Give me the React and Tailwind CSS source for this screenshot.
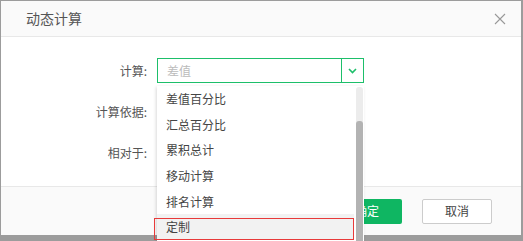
import React from 'react';

const items = ['差值百分比', '汇总百分比', '累积总计', '移动计算', '排名计算', '定制'];

const FormRow = ({ label, children }) => (
  <div className="flex items-center h-[25px]">
    <div className="w-[146px] text-right text-[12px] text-[#555]">{label}</div>
    <div className="ml-[10px]">{children}</div>
  </div>
);

const App = () => {
  return (
    <div
      className="w-[523px] h-[241px] overflow-hidden bg-[#9c9c9c] pt-[1px] pl-[1px] relative"
      style={{ fontFamily: '"Noto Sans CJK SC", "Noto Sans", sans-serif' }}
    >
      <div className="w-[520px] h-[234px] flex flex-col bg-white relative">
        {/* header */}
        <div className="h-[36px] bg-[#fafafa] border-b border-[#e8e8e8] flex items-center justify-between pl-[25px] pr-[15px]">
          <span className="text-[14px] text-[#555]">动态计算</span>
          <svg width="12" height="12" viewBox="0 0 12 12" className="mt-[1px]">
            <path d="M1 1L11 11M11 1L1 11" stroke="#999" strokeWidth="1.1" fill="none" />
          </svg>
        </div>

        {/* body */}
        <div className="flex-1 bg-white pt-[21px] flex flex-col gap-4">
          <FormRow label="计算:">
            <div className="w-[207px] h-[25px] border border-[#1dbf6a] flex">
              <div className="flex-1 flex items-center pl-[9px] text-[12px] text-[#bbb]">差值</div>
              <div className="w-[22px] border-l border-[#1dbf6a] flex items-center justify-center">
                <svg width="9" height="6" viewBox="0 0 9 6">
                  <path d="M1 1L4.5 4.5L8 1" stroke="#1dbf6a" strokeWidth="1.6" fill="none" />
                </svg>
              </div>
            </div>
          </FormRow>
          <FormRow label="计算依据:" />
          <FormRow label="相对于:" />
        </div>

        {/* footer */}
        <div className="h-[49px] bg-[#fafafa] border-t border-[#e8e8e8] flex items-center justify-end gap-5 pr-[29px]">
          <button className="w-[70px] h-[25px] bg-[#0fb662] text-white text-[12px] rounded-[2px]">确定</button>
          <button className="w-[70px] h-[25px] bg-white border border-[#ccc] text-[#444] text-[12px] rounded-[2px]">取消</button>
        </div>

        {/* dropdown */}
        <div className="absolute left-[156px] top-[85px] w-[207px] h-[170px] bg-white shadow-[-1px_1px_3px_rgba(0,0,0,0.15)]">
          <div className="pr-[10px]">
            {items.map((item) => (
              <div
                key={item}
                className={`h-[25.7px] flex items-center pl-[9px] text-[12px] text-[#444] ${item === '定制' ? 'bg-[#f2f2f2]' : ''}`}
              >
                {item}
              </div>
            ))}
          </div>
          <div className="absolute right-[1px] top-[1px] w-[7px] h-[170px] bg-[#ececec] rounded-[3px]">
            <div className="mt-[34px] h-[140px] bg-[#b3b3b3] rounded-[3px]" />
          </div>
          <div className="absolute left-[-3px] top-[132px] w-[200px] h-[22px] border border-[#e83a3a]" />
        </div>
      </div>
    </div>
  );
};

export default App;
